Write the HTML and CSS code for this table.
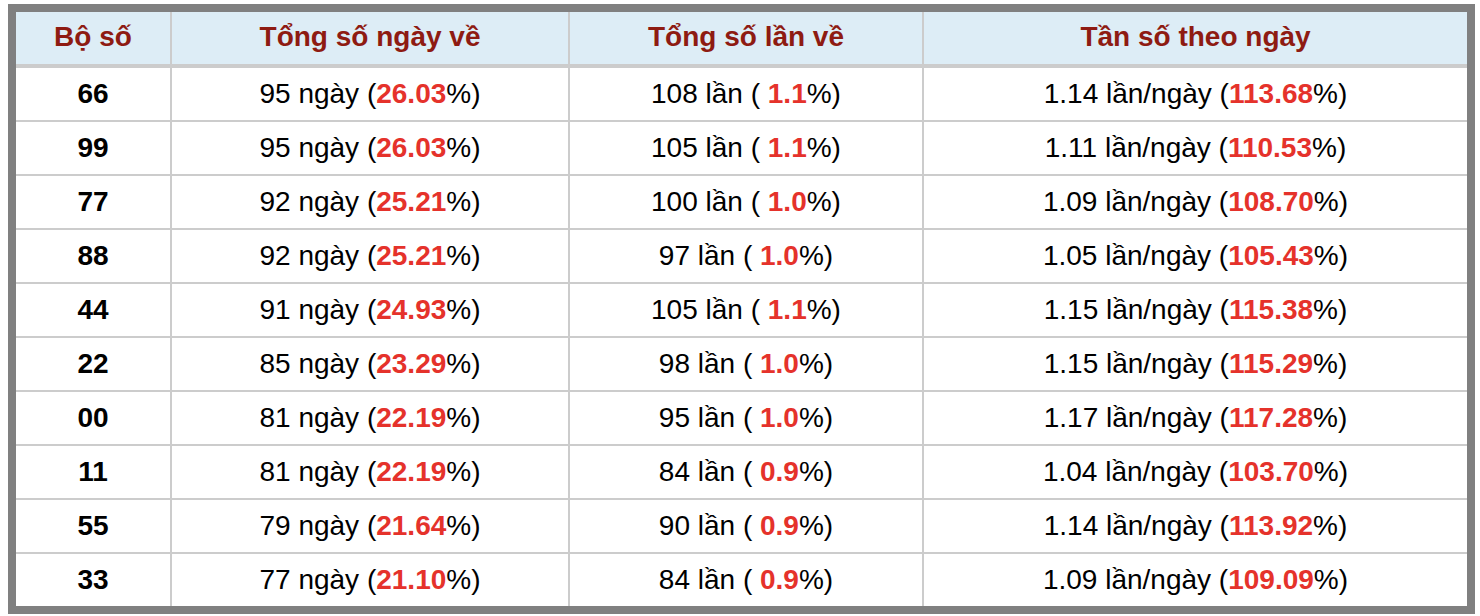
FILE: index.html
```html
<!DOCTYPE html>
<html lang="vi">
<head>
<meta charset="utf-8">
<title>Thống kê bộ số</title>
<link rel="stylesheet" href="styles.css">
</head>
<body>
<div class="frame">
<table class="stats">
<colgroup>
<col class="c1"><col class="c2"><col class="c3"><col class="c4">
</colgroup>
<thead>
<tr><th>Bộ số</th><th>Tổng số ngày về</th><th>Tổng số lần về</th><th>Tần số theo ngày</th></tr>
</thead>
<tbody>
<tr><td class="num">66</td><td>95 ngày (<b>26.03</b>%)</td><td>108 lần ( <b>1.1</b>%)</td><td>1.14 lần/ngày (<b>113.68</b>%)</td></tr>
<tr><td class="num">99</td><td>95 ngày (<b>26.03</b>%)</td><td>105 lần ( <b>1.1</b>%)</td><td>1.11 lần/ngày (<b>110.53</b>%)</td></tr>
<tr><td class="num">77</td><td>92 ngày (<b>25.21</b>%)</td><td>100 lần ( <b>1.0</b>%)</td><td>1.09 lần/ngày (<b>108.70</b>%)</td></tr>
<tr><td class="num">88</td><td>92 ngày (<b>25.21</b>%)</td><td>97 lần ( <b>1.0</b>%)</td><td>1.05 lần/ngày (<b>105.43</b>%)</td></tr>
<tr><td class="num">44</td><td>91 ngày (<b>24.93</b>%)</td><td>105 lần ( <b>1.1</b>%)</td><td>1.15 lần/ngày (<b>115.38</b>%)</td></tr>
<tr><td class="num">22</td><td>85 ngày (<b>23.29</b>%)</td><td>98 lần ( <b>1.0</b>%)</td><td>1.15 lần/ngày (<b>115.29</b>%)</td></tr>
<tr><td class="num">00</td><td>81 ngày (<b>22.19</b>%)</td><td>95 lần ( <b>1.0</b>%)</td><td>1.17 lần/ngày (<b>117.28</b>%)</td></tr>
<tr><td class="num">11</td><td>81 ngày (<b>22.19</b>%)</td><td>84 lần ( <b>0.9</b>%)</td><td>1.04 lần/ngày (<b>103.70</b>%)</td></tr>
<tr><td class="num">55</td><td>79 ngày (<b>21.64</b>%)</td><td>90 lần ( <b>0.9</b>%)</td><td>1.14 lần/ngày (<b>113.92</b>%)</td></tr>
<tr><td class="num">33</td><td>77 ngày (<b>21.10</b>%)</td><td>84 lần ( <b>0.9</b>%)</td><td>1.09 lần/ngày (<b>109.09</b>%)</td></tr>
</tbody>
</table>
</div>
</body>
</html>
```
FILE: styles.css
```css
html, body {
  background: #ffffff;
}
body {
  margin: 4px 0 0 8px;
  font-family: "Liberation Sans", Arial, Helvetica, sans-serif;
  color: #000;
}
.frame {
  width: 1451px;
  border: 8px solid #808080;
}
.stats {
  width: 1451px;
  table-layout: fixed;
  border-collapse: separate;
  border-spacing: 0;
}
.c1 { width: 156px; }
.c2 { width: 398px; }
.c3 { width: 354px; }
.c4 { width: 543px; }
.stats th,
.stats td {
  box-sizing: border-box;
  padding: 0;
  text-align: center;
  vertical-align: middle;
  border-right: 2px solid #cccccc;
  border-bottom: 2px solid #cccccc;
  white-space: nowrap;
}
.stats th:last-child,
.stats td:last-child {
  border-right: none;
}
.stats th {
  height: 56px;
  background: #ddedf6;
  color: #8e1b12;
  font-size: 28px;
  font-weight: bold;
  border-bottom-width: 4px;
  padding-bottom: 2px;
}
.stats td {
  height: 54px;
  font-size: 28px;
  font-weight: normal;
}
.stats tbody tr:last-child td {
  border-bottom: none;
  height: 52px;
}
.stats td b {
  color: #e5322b;
  font-weight: bold;
}
.stats td.num {
  font-weight: bold;
}
```
